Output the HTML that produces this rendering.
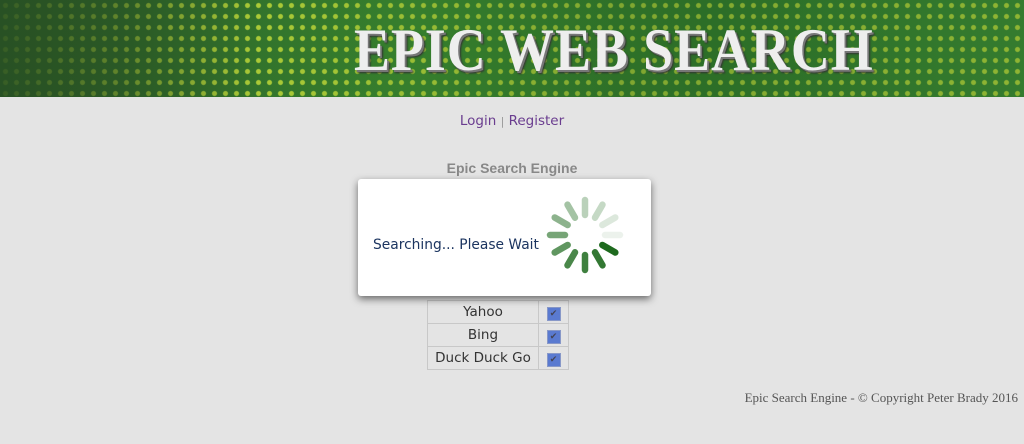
<!DOCTYPE html>
<html><head><style>
body{margin:0;width:1024px;height:444px;background:#e4e4e4;overflow:hidden;font-family:"DejaVu Sans",sans-serif;position:relative}
.ban{position:absolute;left:0;top:0;width:1024px;height:97px;background:
radial-gradient(circle,rgba(220,240,60,.8) 2px,transparent 3px) 0 0/11px 11px,
linear-gradient(90deg,#2c5a28 0%,#2f6a2a 15%,#3a8a30 40%,#2f7a2a 70%,#3a8a34 100%);}
.ban:before{content:"";position:absolute;inset:0;background:linear-gradient(90deg,rgba(40,80,35,.9) 0%,rgba(40,80,35,.6) 12%,rgba(40,80,35,.1) 25%,rgba(40,90,35,.4) 60%,rgba(40,90,35,.3) 100%)}
.ttl{position:absolute;left:354px;top:16px;font-family:"Liberation Serif",serif;font-weight:bold;font-size:60px;color:#eee;letter-spacing:1px;text-shadow:2px 2px 0 #777,3px 3px 2px #333;white-space:nowrap;transform:scaleX(.9);transform-origin:left}
.links{position:absolute;top:113px;width:1024px;text-align:center;font-size:13.5px;color:#6a3d8f}
.links span{color:#999;font-size:11px}
.h{position:absolute;top:160px;width:1024px;text-align:center;font-weight:bold;color:#888;font-family:"Liberation Sans",sans-serif;font-size:14px}
table{position:absolute;left:427px;top:300px;border-collapse:collapse;font-size:13.5px;color:#333}
td{border:1px solid #c8c8c8;height:22px;text-align:center;padding:0}
.cb{display:inline-block;width:12px;height:12px;background:#5a7ad0;border:1px solid #8898c8;color:#445;font-size:9px;line-height:12px}
.modal{position:absolute;left:358px;top:179px;width:293px;height:117px;background:#fff;border-radius:3px;box-shadow:0 3px 8px rgba(0,0,0,.55)}
.modal .t{position:absolute;left:15px;top:58px;font-size:13.8px;color:#1c3560}
.foot{position:absolute;right:6px;top:390px;font-family:"Liberation Serif",serif;font-size:13px;color:#555}
</style></head><body>
<div class="ban"><div class="ttl">EPIC WEB SEARCH</div></div>
<div class="links">Login <span>|</span> Register</div>
<div class="h">Epic Search Engine</div>
<table>
<tr><td style="width:110px">Yahoo</td><td style="width:29px"><span class="cb">✔</span></td></tr>
<tr><td>Bing</td><td><span class="cb">✔</span></td></tr>
<tr><td>Duck Duck Go</td><td><span class="cb">✔</span></td></tr>
</table>
<div class="modal"><div class="t">Searching... Please Wait</div>
<svg style="position:absolute;left:187px;top:16px" width="80" height="80" viewBox="-40 -40 80 80">
<g stroke="#1e6a1e" stroke-width="6.5" stroke-linecap="round">
<line x1="0" y1="-20" x2="0" y2="-35" transform="rotate(120)" opacity="1"/>
<line x1="0" y1="-20" x2="0" y2="-35" transform="rotate(150)" opacity=".9"/>
<line x1="0" y1="-20" x2="0" y2="-35" transform="rotate(180)" opacity=".85"/>
<line x1="0" y1="-20" x2="0" y2="-35" transform="rotate(210)" opacity=".8"/>
<line x1="0" y1="-20" x2="0" y2="-35" transform="rotate(240)" opacity=".7"/>
<line x1="0" y1="-20" x2="0" y2="-35" transform="rotate(270)" opacity=".6"/>
<line x1="0" y1="-20" x2="0" y2="-35" transform="rotate(300)" opacity=".5"/>
<line x1="0" y1="-20" x2="0" y2="-35" transform="rotate(330)" opacity=".4"/>
<line x1="0" y1="-20" x2="0" y2="-35" transform="rotate(0)" opacity=".3"/>
<line x1="0" y1="-20" x2="0" y2="-35" transform="rotate(30)" opacity=".25"/>
<line x1="0" y1="-20" x2="0" y2="-35" transform="rotate(60)" opacity=".15"/>
<line x1="0" y1="-20" x2="0" y2="-35" transform="rotate(90)" opacity=".08"/>
</g></svg></div>
<div class="foot">Epic Search Engine - © Copyright Peter Brady 2016</div>
</body></html>
